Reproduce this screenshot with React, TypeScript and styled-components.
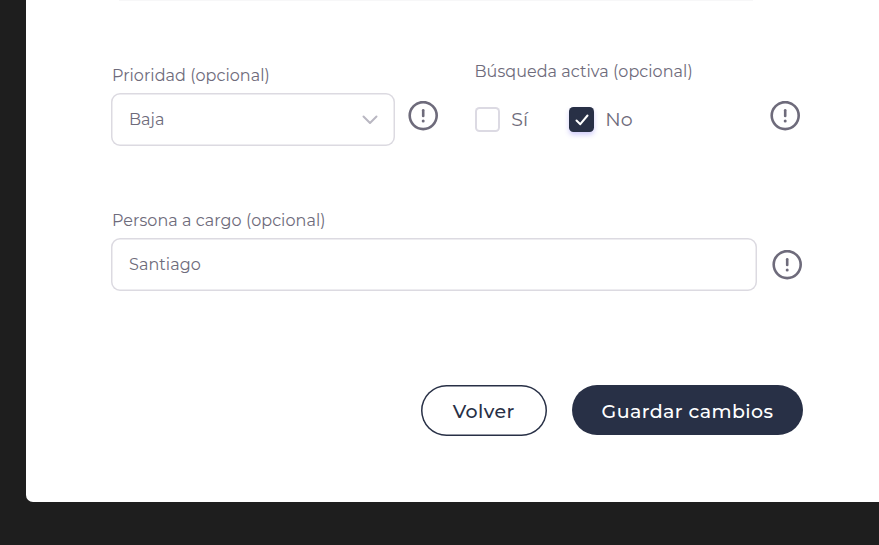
import React from 'react';
import styled, { createGlobalStyle } from 'styled-components';

const GlobalStyle = createGlobalStyle`
  * { box-sizing: border-box; }
  body {
    margin: 0;
    background: #1e1e1e;
    overflow: hidden;
    font-family: Montserrat, Inter, 'Open Sans', sans-serif;
    color: #6e6b7b;
  }
`;

const Page = styled.div`
  height: 545px;
  padding: 0 0 43px 26px;
  background: #1e1e1e;
`;

const Card = styled.main`
  height: 502px;
  padding: 0 75px 0 85px;
  background: #fff;
  border-bottom-left-radius: 7px;
  display: flex;
  flex-direction: column;
`;

const PreviousEdge = styled.div`
  height: 1px;
  width: 634px;
  margin-left: 8px;
  background: #f7f7f8;
`;

const TopRow = styled.div`
  display: flex;
  height: 145px;
  padding-top: 63px;
`;

const Field = styled.div<{ $width: number }>`
  width: ${(p) => p.$width}px;
  flex: none;
`;

const Text = styled.span<{ $size?: number }>`
  display: block;
  font-size: ${(p) => p.$size ?? 16}px;
  font-weight: 400;
  line-height: 24px;
  letter-spacing: 0.05px;
  white-space: nowrap;
`;

const Label = styled(Text)`
  padding-left: 1px;
`;

const ControlLine = styled.div`
  display: flex;
  align-items: flex-start;
  margin-top: 5px;
`;

const InputBox = styled.div<{ $width: number }>`
  width: ${(p) => p.$width}px;
  height: 53px;
  flex: none;
  box-shadow: inset 0 0 0 1.5px #dcdae1;
  border-radius: 9px;
  padding: 0 17px 0 18px;
  display: flex;
  align-items: center;
  justify-content: space-between;
`;

const InfoSlot = styled.span<{ $left: number; $top: number }>`
  display: block;
  height: 30px;
  margin: ${(p) => p.$top}px 0 0 ${(p) => p.$left}px;
`;

const ActiveSearch = styled.div`
  width: 330px;
  margin: -4px 0 0 36.5px;
`;

const Choices = styled.div`
  display: flex;
  align-items: center;
  height: 30px;
  margin-top: 16px;
`;

const Checkbox = styled.span<{ $checked?: boolean }>`
  width: 24.5px;
  height: 24.5px;
  flex: none;
  display: grid;
  place-items: center;
  margin: 0 -0.5px 1px 0.8px;
  border-radius: 4.5px;
  background: ${(p) => (p.$checked ? '#283046' : '#fff')};
  box-shadow: ${(p) =>
    p.$checked ? '0 3px 5px rgba(115, 103, 240, 0.32)' : 'inset 0 0 0 2px #dcdae3'};
`;

const Choice = styled.label<{ $width: number }>`
  display: flex;
  align-items: center;
  gap: 12px;
  width: ${(p) => p.$width}px;
`;

const BottomRow = styled.div`
  display: flex;
  flex-direction: column;
  padding-top: 63px;
`;

const Actions = styled.div`
  display: flex;
  align-items: center;
  gap: 25.5px;
  margin: 93.5px 0 0 310px;
`;

const Button = styled.button<{ $primary?: boolean; $width: number }>`
  width: ${(p) => p.$width}px;
  height: ${(p) => (p.$primary ? 50 : 51)}px;
  flex: none;
  padding: 2px 0 0;
  border-radius: 26px;
  border: 0;
  box-shadow: ${(p) => (p.$primary ? 'none' : 'inset 0 0 0 1.5px #283046')};
  background: ${(p) => (p.$primary ? '#283046' : '#fff')};
  color: ${(p) => (p.$primary ? '#fff' : '#283046')};
  font-family: inherit;
  font-size: 19px;
  font-weight: 500;
  letter-spacing: 0.4px;
  white-space: nowrap;
`;

const InfoIcon = () => (
  <svg width="30" height="30" viewBox="0 0 30 30" fill="none" stroke="#6e6b7b" strokeWidth="2.6">
    <circle cx="15.2" cy="14.6" r="13.5" />
    <path d="M15.2 9.2v5.7" strokeLinecap="round" />
    <circle cx="15.2" cy="20" r="1.5" fill="#6e6b7b" stroke="none" />
  </svg>
);

const Chevron = () => (
  <svg width="16" height="10" viewBox="0 0 16 10" fill="none" stroke="#b9b7c2" strokeWidth="2" strokeLinecap="round" strokeLinejoin="round">
    <path d="M1.5 1.5 8 8l6.5-6.5" />
  </svg>
);

const Check = () => (
  <svg width="14" height="12" viewBox="0 0 14 12" fill="none" stroke="#fff" strokeWidth="2" strokeLinecap="round" strokeLinejoin="round">
    <path d="M1.5 6.5 5.3 10.2 12.5 1.5" />
  </svg>
);

export default function App() {
  return (
    <>
      <GlobalStyle />
      <Page>
        <Card>
          <PreviousEdge />
          <TopRow>
            <Field $width={327}>
              <Label>Prioridad (opcional)</Label>
              <ControlLine>
                <InputBox $width={283.5}>
                  <Text>Baja</Text>
                  <Chevron />
                </InputBox>
                <InfoSlot $left={13.5} $top={8}>
                  <InfoIcon />
                </InfoSlot>
              </ControlLine>
            </Field>
            <ActiveSearch>
              <Text>Búsqueda activa (opcional)</Text>
              <ControlLine>
                <Choices>
                  <Choice $width={94}>
                    <Checkbox />
                    <Text $size={19}>Sí</Text>
                  </Choice>
                  <Choice $width={94}>
                    <Checkbox $checked>
                      <Check />
                    </Checkbox>
                    <Text $size={19}>No</Text>
                  </Choice>
                </Choices>
                <InfoSlot $left={107.5} $top={12}>
                  <InfoIcon />
                </InfoSlot>
              </ControlLine>
            </ActiveSearch>
          </TopRow>
          <BottomRow>
            <Label>Persona a cargo (opcional)</Label>
            <ControlLine>
              <InputBox $width={646}>
                <Text>Santiago</Text>
              </InputBox>
              <InfoSlot $left={15} $top={12}>
                <InfoIcon />
              </InfoSlot>
            </ControlLine>
          </BottomRow>
          <Actions>
            <Button $width={125.5}>Volver</Button>
            <Button $primary $width={231}>Guardar cambios</Button>
          </Actions>
        </Card>
      </Page>
    </>
  );
}
